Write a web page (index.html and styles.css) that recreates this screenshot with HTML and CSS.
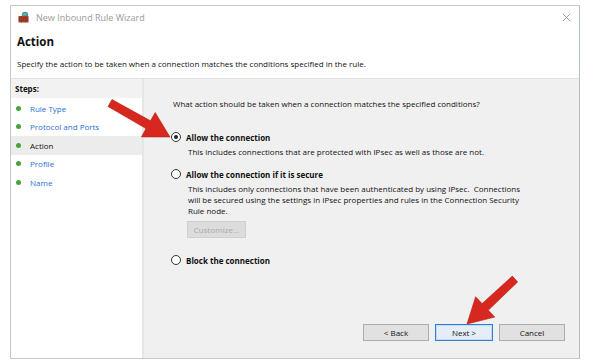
FILE: index.html
```html
<!DOCTYPE html>
<html lang="en">
<head>
    <meta charset="UTF-8">
    <title>New Inbound Rule Wizard</title>
    <link rel="stylesheet" href="styles.css">
</head>
<body>
    <div class="window">
        <div class="titlebar">
            <svg class="app-icon" viewBox="0 0 12 12" xmlns="http://www.w3.org/2000/svg">
                <circle cx="7" cy="4" r="3.2" fill="#3d8fd1"/>
                <path d="M5 2.5 Q7 1.5 9 3 L8 4.5 Q6.5 4 5.5 5 Z" fill="#6cbf3a"/>
                <rect x="0.5" y="5" width="10" height="6.5" fill="#a8432c"/>
                <path d="M0.5 7.2 H10.5 M0.5 9.4 H10.5 M3.5 5 V7.2 M7.5 5 V7.2 M2 7.2 V9.4 M5.5 7.2 V9.4 M9 7.2 V9.4 M3.5 9.4 V11.5 M7.5 9.4 V11.5" stroke="#7a2a1a" stroke-width="0.5"/>
            </svg>
            <span class="title-text">New Inbound Rule Wizard</span>
            <svg class="close-icon" viewBox="0 0 10 10" xmlns="http://www.w3.org/2000/svg">
                <path d="M1 1 L9 9 M9 1 L1 9" stroke="#8a8a8a" stroke-width="0.9"/>
            </svg>
        </div>

        <div class="header">
            <h1 class="header-title">Action</h1>
            <p class="header-desc">Specify the action to be taken when a connection matches the conditions specified in the rule.</p>
        </div>

        <div class="wizard-body">
            <div class="steps">
                <div class="steps-head">Steps:</div>
                <ul class="step-list">
                    <li class="step"><span class="dot"></span><a>Rule Type</a></li>
                    <li class="step"><span class="dot"></span><a>Protocol and Ports</a></li>
                    <li class="step current"><span class="dot"></span><a>Action</a></li>
                    <li class="step"><span class="dot"></span><a>Profile</a></li>
                    <li class="step"><span class="dot"></span><a>Name</a></li>
                </ul>
            </div>

            <div class="content">
                <p class="question">What action should be taken when a connection matches the specified conditions?</p>

                <div class="option">
                    <label class="radio-row"><span class="radio checked"></span><b>Allow the connection</b></label>
                    <p class="option-desc">This includes connections that are protected with IPsec as well as those are not.</p>
                </div>

                <div class="option option-secure">
                    <label class="radio-row"><span class="radio"></span><b>Allow the connection if it is secure</b></label>
                    <p class="option-desc">This includes only connections that have been authenticated by using IPsec.&nbsp; Connections will be secured using the settings in IPsec properties and rules in the Connection Security Rule node.</p>
                    <button class="btn btn-disabled">Customize...</button>
                </div>

                <div class="option">
                    <label class="radio-row"><span class="radio"></span><b>Block the connection</b></label>
                </div>

                <div class="footer">
                    <button class="btn">&lt; Back</button>
                    <button class="btn btn-default">Next &gt;</button>
                    <button class="btn">Cancel</button>
                </div>
            </div>
        </div>

        <!-- red callout arrows drawn over the dialog -->
        <svg class="callouts" viewBox="0 0 593 364" xmlns="http://www.w3.org/2000/svg">
            <polygon points="112,99.5 150.5,120.8 155.2,112.5 170,137 141.4,136.9 146,128.6 108,106.5" fill="#d6281e" stroke="#b71c14" stroke-width="0.6" stroke-linejoin="round"/>
            <polygon points="512.3,276.1 482.1,303.6 475.6,296.7 467,324 494.8,317.1 488.3,310.2 517.7,281.9" fill="#d6281e" stroke="#b71c14" stroke-width="0.6" stroke-linejoin="round"/>
        </svg>
    </div>
</body>
</html>
```

FILE: styles.css
```css
:root {
    --border-color: #c8c8c8;
    --panel-bg: #f0f0f0;
    --link-color: #2a6fd6;
    --text-color: #111;
}
* { box-sizing: border-box; }
body {
    margin: 0;
    background: #fff;
    font-family: 'Open Sans', 'Noto Sans', sans-serif;
    font-size: 8px;
    color: var(--text-color);
}
.window {
    position: relative;
    margin: 5px 0 0 10px;
    width: 570px;
    height: 354px;
    border: 1px solid var(--border-color);
    border-right-color: #b4bcc8;
    background: #fff;
    display: flex;
    flex-direction: column;
}
.titlebar {
    height: 23px;
    display: flex;
    align-items: center;
    padding: 0 8px 0 7px;
}
.app-icon { width: 12px; height: 12px; margin-right: 6px; margin-top: -2px; }
.title-text { color: #9a9a9a; font-size: 9px; flex: 1; }
.close-icon { width: 9px; height: 9px; }

.header {
    height: 50px;
    padding: 6px 6px 0 6px;
    border-bottom: 1px solid #e2e2e2;
}
.header-title { margin: 0; font-size: 11.5px; font-weight: 700; line-height: 14px; }
.header-desc { margin: 9px 0 0; line-height: 11px; }

.wizard-body { flex: 1; display: flex; }
.steps {
    width: 133px;
    border-right: 2px solid #e6e6e6;
    background: #fff;
}
.steps-head {
    height: 19px;
    line-height: 19px;
    padding-left: 4px;
    background: #f2f2f2;
    font-weight: 700;
}
.step-list { list-style: none; margin: 1px 0 0; padding: 0; }
.step {
    height: 18.5px;
    display: flex;
    align-items: center;
    padding-left: 5px;
}
.step a { color: var(--link-color); }
.step.current { background: #ececec; }
.step.current a { color: var(--text-color); }
.dot {
    width: 5px; height: 5px;
    border-radius: 50%;
    background: #45a537;
    margin-right: 9px;
}

.content {
    flex: 1;
    background: var(--panel-bg);
    padding: 19px 14px 17px 29px;
    display: flex;
    flex-direction: column;
}
.question { margin: 0 0 22px; line-height: 11px; }
.option { margin-bottom: 11px; }
.option-secure { margin-bottom: 16px; }
.radio-row { display: flex; align-items: center; gap: 5px; margin-left: -2px; height: 12px; }
.radio-row b { font-weight: 700; }
.radio {
    width: 10px; height: 10px;
    border: 1px solid #333;
    border-radius: 50%;
    background: #fff;
    display: flex; align-items: center; justify-content: center;
}
.radio.checked::after {
    content: "";
    width: 4px; height: 4px;
    border-radius: 50%;
    background: #222;
}
.option-desc { margin: 3px 0 0 15px; line-height: 11px; width: 340px; }

.btn {
    font: inherit;
    height: 17px;
    padding: 0;
    border: 1px solid #adadad;
    background: #e1e1e1;
    color: var(--text-color);
}
.btn-disabled {
    margin: 5px 0 0 14px;
    width: 59px;
    color: #a8a8a8;
    border-color: #cfcfcf;
    background: #dcdcdc;
}
.footer {
    margin-top: auto;
    display: flex;
    justify-content: flex-end;
    gap: 6px;
}
.footer .btn { width: 66px; }
.footer .btn-default {
    width: 58px;
    border: 1px solid #2e7fd6;
    background: #e5eef8;
    box-shadow: inset 0 0 0 1px #c4daf2;
}

.callouts {
    position: absolute;
    left: -11px; top: -6px;
    width: 593px; height: 364px;
    pointer-events: none;
}
```
